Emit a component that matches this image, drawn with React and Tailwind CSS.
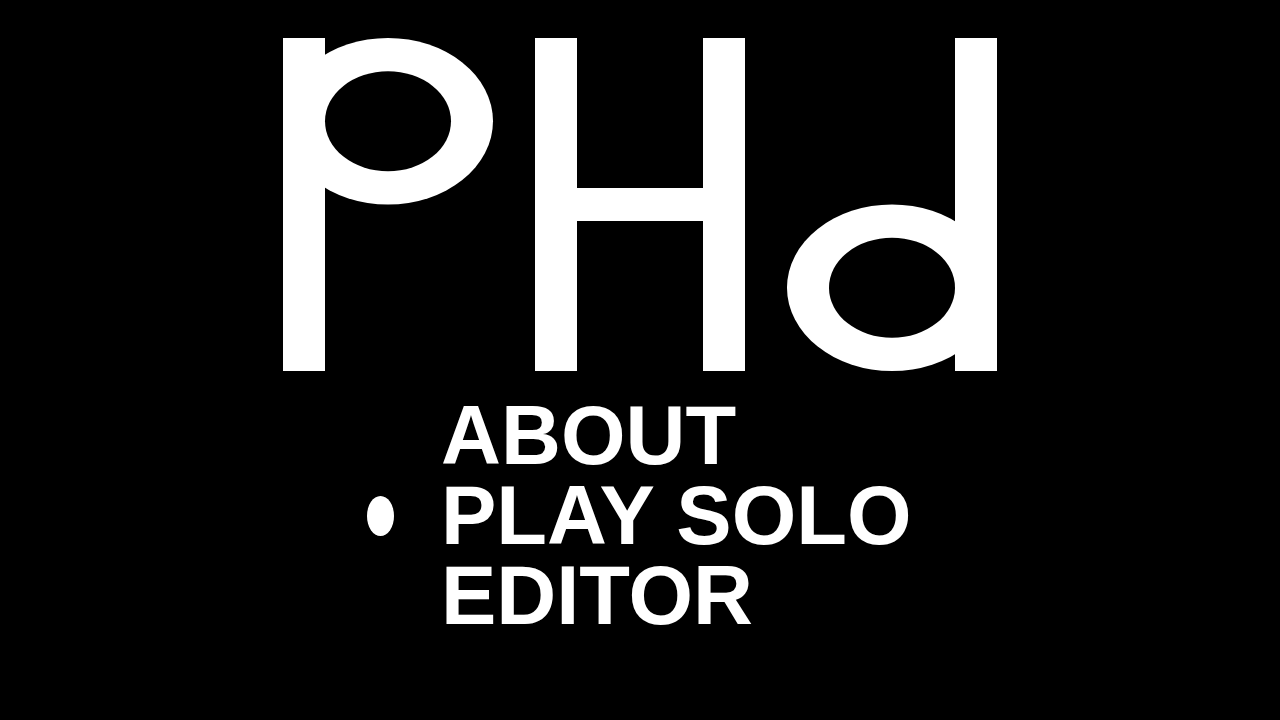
import React, { useState } from 'react';

const ITEMS = [
  { id: 'about', label: 'ABOUT' },
  { id: 'solo', label: 'PLAY SOLO' },
  { id: 'editor', label: 'EDITOR' },
];

// Built from bars and rings on a 17 x 10 grid
function Logo() {
  return (
    <svg
      viewBox="0 0 714 333"
      className="w-full max-w-[714px] h-auto"
      fill="white"
      role="img"
      aria-label="PHd"
    >
      <rect x="0" y="0" width="42" height="333" />
      <ellipse cx="105" cy="83.25" rx="105" ry="83.25" />
      <ellipse cx="105" cy="83.25" rx="63" ry="50" fill="black" />

      <rect x="252" y="0" width="42" height="333" />
      <rect x="294" y="150" width="126" height="33" />
      <rect x="420" y="0" width="42" height="333" />

      <rect x="672" y="0" width="42" height="333" />
      <ellipse cx="609" cy="249.75" rx="105" ry="83.25" />
      <ellipse cx="609" cy="249.75" rx="63" ry="50" fill="black" />
    </svg>
  );
}

export default function App() {
  const [selected, setSelected] = useState('solo');

  return (
    <main className="min-h-screen bg-black text-white flex flex-col items-center pt-[38px]">
      <h1 className="w-full flex justify-center">
        <Logo />
      </h1>

      <nav className="w-full max-w-[560px] mt-[25px]">
        <ul>
          {ITEMS.map(item => (
            <li key={item.id}>
              <button
                onClick={() => setSelected(item.id)}
                onFocus={() => setSelected(item.id)}
                aria-current={selected === item.id ? 'true' : undefined}
                className="w-full flex items-center gap-[21px] text-left whitespace-nowrap font-['Liberation_Sans',Arial,sans-serif] font-bold text-[83px] leading-[80px] outline-none"
              >
                {/* Selection marker */}
                <span className="w-15 shrink-0 flex pl-[7px]">
                  {selected === item.id && <span className="w-[27px] h-10 bg-white rounded-[50%]" />}
                </span>
                <span>{item.label}</span>
              </button>
            </li>
          ))}
        </ul>
      </nav>
    </main>
  );
}
